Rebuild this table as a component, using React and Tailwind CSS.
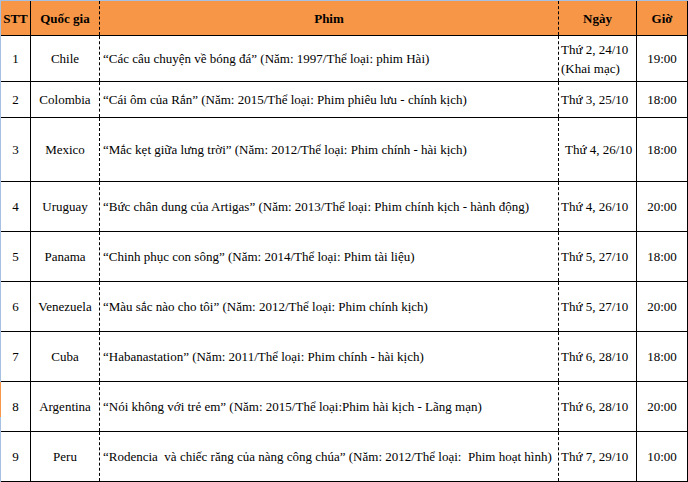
import React from "react";

const rows = [
  { stt: "1", country: "Chile", film: "“Các câu chuyện về bóng đá” (Năm: 1997/Thể loại: phim Hài)", day: ["Thứ 2, 24/10", "(Khai mạc)"], time: "19:00", h: "h-[46px]" },
  { stt: "2", country: "Colombia", film: "“Cái ôm của Rắn” (Năm: 2015/Thể loại: Phim phiêu lưu - chính kịch)", day: ["Thứ 3, 25/10"], time: "18:00", h: "h-[36px]" },
  { stt: "3", country: "Mexico", film: "“Mắc kẹt giữa lưng trời” (Năm: 2012/Thể loại: Phim chính - hài kịch)", day: ["Thứ 4, 26/10"], time: "18:00", h: "h-[64px]", indent: true },
  { stt: "4", country: "Uruguay", film: "“Bức chân dung của Artigas” (Năm: 2013/Thể loại: Phim chính kịch - hành động)", day: ["Thứ 4, 26/10"], time: "20:00", h: "h-[50px]" },
  { stt: "5", country: "Panama", film: "“Chinh phục con sông” (Năm: 2014/Thể loại: Phim tài liệu)", day: ["Thứ 5, 27/10"], time: "18:00", h: "h-[50px]" },
  { stt: "6", country: "Venezuela", film: "“Màu sắc nào cho tôi” (Năm: 2012/Thể loại: Phim chính kịch)", day: ["Thứ 5, 27/10"], time: "20:00", h: "h-[50px]" },
  { stt: "7", country: "Cuba", film: "“Habanastation” (Năm: 2011/Thể loại: Phim chính - hài kịch)", day: ["Thứ 6, 28/10"], time: "18:00", h: "h-[50px]" },
  { stt: "8", country: "Argentina", film: "“Nói không với trẻ em” (Năm: 2015/Thể loại:Phim hài kịch - Lãng mạn)", day: ["Thứ 6, 28/10"], time: "20:00", h: "h-[50px]" },
  { stt: "9", country: "Peru", film: "“Rodencia  và chiếc răng của nàng công chúa” (Năm: 2012/Thể loại:  Phim hoạt hình)", day: ["Thứ 7, 29/10"], time: "10:00", h: "h-[50px]" },
];

// each row: a line of cells, then its own 1px solid rule underneath
function Row({ h, className = "", children }) {
  return (
    <div className={`flex flex-col ${h} ${className}`}>
      <div className="flex flex-1 min-h-0">{children}</div>
      <div className="h-px bg-black shrink-0" />
    </div>
  );
}

const solid = "flex items-center border-r border-black";
const dashed = "flex items-center border-r border-dashed border-black";

export default function App() {
  return (
    <div className="w-[688px] h-[482px] bg-white text-black overflow-hidden flex flex-col font-[family-name:'Liberation_Serif','Times_New_Roman',serif] text-[13px] leading-[15px]">
      <div className="h-px w-full bg-[#a6c0e2]" />
      <div className="flex flex-1">
        {/* left edge strip */}
        <div className="w-px flex flex-col">
          <div className="h-[381px] bg-[#a6c0e2]" />
          <div className="h-[35px] bg-[#f79646]" />
          <div className="flex-1 bg-[#a6c0e2]" />
        </div>
        <div className="flex flex-col w-[687px]">
          <Row h="h-[35px]" className="bg-[#f79646] font-bold">
            <div className={`${solid} w-[30px] justify-center`}>STT</div>
            <div className={`${dashed} w-[69px] justify-center`}>Quốc gia</div>
            <div className={`${dashed} w-[459px] justify-center`}>Phim</div>
            <div className={`${solid} w-[78px] justify-center`}>Ngày</div>
            <div className={`${solid} w-[51px] justify-center`}>Giờ</div>
          </Row>
          {rows.map((r) => (
            <Row key={r.stt} h={r.h}>
              <div className={`${solid} w-[30px] justify-center`}>{r.stt}</div>
              <div className={`${dashed} w-[69px] justify-center`}>{r.country}</div>
              <div className={`${dashed} w-[459px] pl-[3px] whitespace-pre`}>{r.film}</div>
              <div className={`${solid} w-[78px] ${r.indent ? "pl-[6px]" : "pl-[2px]"}`}>
                <div className="flex flex-col leading-[19px]">
                  {r.day.map((d) => (
                    <span key={d} className="whitespace-nowrap">{d}</span>
                  ))}
                </div>
              </div>
              <div className={`${solid} w-[51px] justify-center`}>{r.time}</div>
            </Row>
          ))}
        </div>
      </div>
    </div>
  );
}
